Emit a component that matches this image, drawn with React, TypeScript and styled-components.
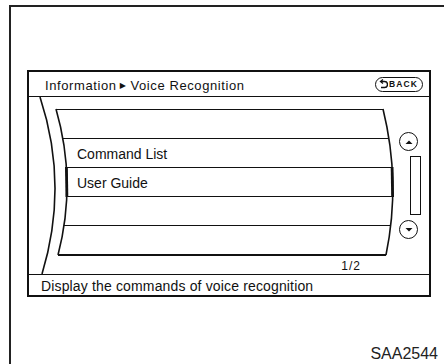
import React from 'react'
import styled, { createGlobalStyle } from 'styled-components'

const GlobalStyle = createGlobalStyle`
  html, body {
    margin: 0;
    padding: 0;
    background: #fff;
  }
  body {
    font-family: 'Liberation Sans', Arial, sans-serif;
    color: #111;
  }
`

// chord of each row line across the drum (left / right inset inside the list)
const rows = [
  { l: 0, r: 10, text: '' },
  { l: 7, r: 4, text: 'Command List' },
  { l: 10, r: 1, text: 'User Guide' },
  { l: 11, r: 0, text: '' },
  { l: 8, r: 2, text: '' },
]

export default function App() {
  return (
    <>
      <GlobalStyle />
      <Page>
        <Frame>
          <Screen>
            <Header>
              <Crumb>
                Information<Sep>▶</Sep>Voice Recognition
              </Crumb>
              <BackButton>
                <svg width="9" height="10" viewBox="0 0 9 10">
                  <path d="M2 2.5 H5.5 A3 3 0 0 1 5.5 8.5 H2" fill="none" stroke="#111" strokeWidth="1.4" />
                  <path d="M4 0.5 L1.5 2.5 L4 4.5" fill="none" stroke="#111" strokeWidth="1.3" />
                </svg>
                <span>BACK</span>
              </BackButton>
            </Header>

            <Body>
              <Drum>
                <List>
                  {rows.map((row, i) => (
                    <Row key={i} $l={row.l} $r={row.r}>
                      {row.text}
                    </Row>
                  ))}
                  <Rim />
                </List>
                <PageNum>1/2</PageNum>
              </Drum>

              <Scroll>
                <RoundButton $mt={35}>
                  <svg width="8" height="6" viewBox="0 0 8 6">
                    <polygon points="0.5,5 4,1.5 7.5,5" fill="#111" />
                  </svg>
                </RoundButton>
                <Track />
                <RoundButton $mt={5}>
                  <svg width="8" height="6" viewBox="0 0 8 6">
                    <polygon points="0.5,1 4,4.5 7.5,1" fill="#111" />
                  </svg>
                </RoundButton>
              </Scroll>

              <Curves width="400" height="177" viewBox="0 0 400 177">
                <g fill="none" stroke="#111">
                  <path d="M11 0 Q40 88 13 177" strokeWidth="1.6" />
                  <path d="M27 12 Q48 85 29 158" strokeWidth="1.6" />
                  <path d="M354 12 Q372 85 357 158" strokeWidth="1.6" />
                  <path d="M37.4 70 L37.9 100" strokeWidth="2.8" />
                  <path d="M363.1 70 L363.6 100" strokeWidth="2.8" />
                </g>
              </Curves>
            </Body>

            <Footer>Display the commands of voice recognition</Footer>
          </Screen>
          <Caption>SAA2544</Caption>
        </Frame>
      </Page>
    </>
  )
}

const Page = styled.div`
  width: 444px;
  height: 364px;
  overflow: hidden;
  padding: 5px 0 0 9px;
  box-sizing: border-box;
`

const Frame = styled.div`
  height: 100%;
  border-top: 2px solid #222;
  border-left: 2px solid #222;
  display: flex;
  flex-direction: column;
`

const Screen = styled.div`
  margin: 63px 0 0 16px;
  width: 404px;
  height: 227px;
  box-sizing: border-box;
  border: 2px solid #111;
  display: flex;
  flex-direction: column;
`

const Header = styled.div`
  height: 25px;
  box-sizing: border-box;
  border-bottom: 1px solid #111;
  padding: 2px 6px 0 16px;
  display: flex;
  align-items: center;
  justify-content: space-between;
`

const Crumb = styled.div`
  font-size: 13px;
  letter-spacing: 0.6px;
  display: flex;
  align-items: center;
`

const Sep = styled.span`
  font-family: 'DejaVu Sans', sans-serif;
  font-size: 8px;
  margin: 0 4px 0 3px;
`

const BackButton = styled.div`
  width: 48px;
  height: 15px;
  margin-top: -2px;
  box-sizing: border-box;
  border: 1.5px solid #111;
  border-radius: 8px;
  padding-left: 3px;
  display: flex;
  align-items: center;
  gap: 1px;
  font-size: 8.5px;
  font-weight: bold;
  letter-spacing: 1.1px;
`

const Body = styled.div`
  position: relative;
  height: 177px;
  display: flex;
`

const Drum = styled.div`
  width: 368px;
  display: flex;
  flex-direction: column;
`

const List = styled.div`
  margin: 12px 0 0 27px;
  width: 337px;
  display: flex;
  flex-direction: column;
`

const Row = styled.div<{ $l: number; $r: number }>`
  height: 29px;
  box-sizing: border-box;
  border-top: 1.3px solid #111;
  margin: 0 ${p => p.$r}px 0 ${p => p.$l}px;
  padding-left: ${p => 21 - p.$l}px;
  font-size: 14px;
  line-height: 30px;
  white-space: nowrap;
`

const Rim = styled.div`
  margin: 0 7px 0 2px;
  border-top: 2px solid #111;
`

const PageNum = styled.div`
  margin-top: 4px;
  padding-right: 36px;
  text-align: right;
  font-size: 12px;
  line-height: 12px;
  letter-spacing: 1px;
`

const Scroll = styled.div`
  flex: 1;
  display: flex;
  flex-direction: column;
`

const RoundButton = styled.div<{ $mt: number }>`
  width: 19px;
  height: 19px;
  box-sizing: border-box;
  border: 1.5px solid #111;
  border-radius: 50%;
  margin: ${p => p.$mt}px 0 0 2px;
  display: flex;
  align-items: center;
  justify-content: center;
`

const Track = styled.div`
  width: 11px;
  height: 59px;
  box-sizing: border-box;
  border: 1.5px solid #111;
  margin: 5px 0 0 13px;
`

const Curves = styled.svg`
  position: absolute;
  left: 0;
  top: 0;
  pointer-events: none;
`

const Footer = styled.div`
  height: 20px;
  border-top: 1px solid #111;
  padding-left: 12px;
  font-size: 14px;
  line-height: 22px;
  letter-spacing: 0.15px;
  white-space: nowrap;
`

const Caption = styled.div`
  align-self: flex-end;
  margin: 49px 6px 0 0;
  font-size: 16px;
  line-height: 16px;
  color: #222;
`
